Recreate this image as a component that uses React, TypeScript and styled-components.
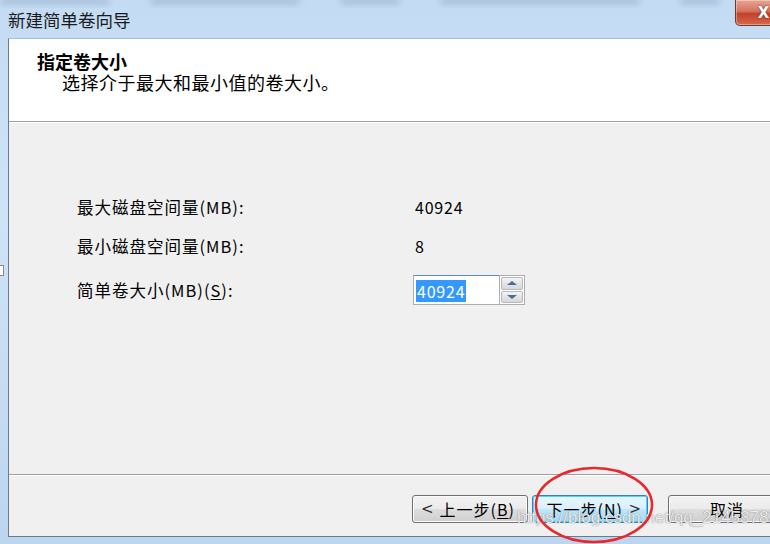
import React from 'react';
import styled, { createGlobalStyle, css } from 'styled-components';

const GlobalStyle = createGlobalStyle`
  html, body {
    margin: 0;
    padding: 0;
    width: 770px;
    height: 544px;
    overflow: hidden;
    background: #c9def3;
  }
  * {
    box-sizing: border-box;
  }
`;

const CJK = `"Noto Sans CJK SC", "Noto Sans", sans-serif`;

const Window = styled.div`
  position: relative;
  width: 803px;
  height: 544px;
  display: flex;
  flex-direction: column;
  background: linear-gradient(180deg, #c3dcf3 0%, #cfe3f7 40%, #bcd6f0 100%);
  font-family: ${CJK};
  color: #000;
`;

const TitleBar = styled.div`
  height: 38px;
  display: flex;
  flex-direction: column;
  position: relative;
`;

const GhostRow = styled.div`
  height: 8px;
  display: flex;
  gap: 40px;
  overflow: hidden;
`;

const Ghost = styled.div<{ $w: number }>`
  width: ${(p) => p.$w}px;
  height: 8px;
  margin-top: -3px;
  border-radius: 4px;
  background: rgba(80, 100, 130, 0.22);
  filter: blur(3px);
`;

const TitleRow = styled.div`
  flex: 1;
  display: flex;
  align-items: flex-start;
  padding-left: 8px;
`;

const TitleText = styled.div`
  font-size: 17.5px;
  line-height: 22px;
  margin-top: 1px;
  color: #1b1b1b;
`;

const CloseButton = styled.div`
  position: absolute;
  top: 0;
  left: 735px;
  width: 47px;
  height: 26px;
  border: 1px solid #6b3a34;
  border-top: none;
  border-radius: 0 0 5px 5px;
  background: linear-gradient(180deg, #e8a596 0%, #d4735d 45%, #c4402a 55%, #d46a4c 100%);
  box-shadow: inset 0 0 0 1px rgba(255, 255, 255, 0.35);
  color: #fff;
  font: bold 15px "DejaVu Sans", sans-serif;
  display: flex;
  align-items: center;
  justify-content: center;
  padding-left: 10px;
  text-shadow: 0 0 2px #5a1a10;
`;

const Frame = styled.div`
  flex: 1;
  margin: 0 8px 7px 8px;
  display: flex;
  flex-direction: column;
  border-left: 1px solid #6a7b8f;
  border-top: 1px solid #a9bfd6;
  border-bottom: 1px solid #6a7b8f;
  background: #f0f0f0;
`;

const Header = styled.div`
  height: 83px;
  background: #fff;
  padding: 12px 0 0 28px;
  border-bottom: 1px solid #a0a0a0;
  box-shadow: 0 1px 0 #fff;
`;

const HeaderTitle = styled.div`
  font-size: 18px;
  line-height: 21px;
  font-weight: bold;
`;

const HeaderSub = styled.div`
  font-size: 18px;
  line-height: 20px;
  padding-left: 25px;
  letter-spacing: 0.5px;
`;

const Body = styled.div`
  flex: 1;
  padding: 75px 0 0 68px;
  border-bottom: 1px solid #a0a0a0;
  box-shadow: 0 1px 0 #fff;
`;

const Form = styled.div`
  display: grid;
  grid-template-columns: 336px auto;
  row-gap: 19px;
  align-items: center;
`;

const Label = styled.div`
  font-size: 16.5px;
  line-height: 20px;
  letter-spacing: 1px;
`;

const Value = styled.div`
  font-size: 16px;
  line-height: 20px;
  letter-spacing: 0.8px;
  padding-left: 2px;
`;

const Spinner = styled.div`
  display: flex;
  height: 30px;
  width: 112px;
`;

const SpinInput = styled.div`
  width: 86px;
  height: 30px;
  border: 1px solid #abadb3;
  border-top-color: #5c8fc0;
  border-right: none;
  background: #fff;
  padding: 3px 0 0 2px;
`;

const Selected = styled.span`
  background: #3399ff;
  color: #fff;
  font-size: 16px;
  line-height: 22px;
  letter-spacing: 0.8px;
  padding: 0 1px;
  display: inline-block;
`;

const SpinButtons = styled.div`
  width: 26px;
  height: 30px;
  border: 1px solid #abadb3;
  background: #fff;
  padding: 1px;
  display: flex;
  flex-direction: column;
  gap: 1px;
`;

const SpinBtn = styled.div<{ $down?: boolean }>`
  flex: 1;
  border: 1px solid #b8b8b8;
  border-radius: 2px;
  background: linear-gradient(180deg, #f4f4f4 0%, #e4e4e4 50%, #d8d8d8 100%);
  display: flex;
  align-items: center;
  justify-content: center;
  &::after {
    content: '';
    width: 0;
    height: 0;
    border-left: 5px solid transparent;
    border-right: 5px solid transparent;
    ${(p) =>
      p.$down
        ? css`border-top: 4px solid #4a6aa0;`
        : css`border-bottom: 4px solid #4a6aa0;`}
  }
`;

const Footer = styled.div`
  height: 61px;
  display: flex;
  padding: 20px 0 0 403px;
  gap: 4px;
`;

const Button = styled.div<{ $focused?: boolean; $spaced?: boolean }>`
  flex: none;
  width: 116px;
  height: 28px;
  border: 1px solid #707070;
  border-radius: 3px;
  background: linear-gradient(180deg, #f2f2f2 0%, #ebebeb 48%, #dddddd 52%, #cfcfcf 100%);
  box-shadow: inset 0 0 0 1px #fcfcfc;
  font-size: 16px;
  line-height: 26px;
  white-space: nowrap;
  display: flex;
  align-items: center;
  padding: 0 6px 0 8px;
  margin-left: ${(p) => (p.$spaced ? '16px' : '0')};
  ${(p) =>
    p.$focused &&
    css`
      border-color: #3c7fb1;
      background: linear-gradient(180deg, #eaf6fd 0%, #d9f0fc 48%, #bee6fd 52%, #a7d9f5 100%);
      box-shadow: inset 0 0 0 1px #48d8fb;
    `}
`;

const CenteredText = styled.span`
  flex: 1;
  text-align: center;
  letter-spacing: 1px;
`;

const Key = styled.span`
  text-decoration: underline;
  text-underline-offset: 2px;
`;

const Chevron = styled.span`
  font-family: "DejaVu Sans", sans-serif;
  font-size: 15px;
  color: #333;
`;

const Watermark = styled.div`
  position: absolute;
  left: 517px;
  top: 508px;
  font: 17px "Liberation Sans", Arial, sans-serif;
  color: rgba(255, 255, 255, 0.85);
  text-shadow: 0 0 1px rgba(110, 110, 110, 0.8), 0 0 1px rgba(110, 110, 110, 0.5);
  pointer-events: none;
  white-space: nowrap;
`;

const Annotation = styled.svg`
  position: absolute;
  left: 530px;
  top: 462px;
  pointer-events: none;
`;

const EdgeMark = styled.div`
  position: absolute;
  left: -4px;
  top: 265px;
  width: 8px;
  height: 11px;
  border: 1px solid #888;
  background: #fff;
`;

export default function App() {
  return (
    <>
      <GlobalStyle />
      <Window>
        <TitleBar>
          <GhostRow>
            <Ghost $w={110} />
            <Ghost $w={150} />
            <Ghost $w={60} />
            <Ghost $w={200} />
            <Ghost $w={40} />
          </GhostRow>
          <TitleRow>
            <TitleText>新建简单卷向导</TitleText>
          </TitleRow>
          <CloseButton>X</CloseButton>
        </TitleBar>
        <Frame>
          <Header>
            <HeaderTitle>指定卷大小</HeaderTitle>
            <HeaderSub>选择介于最大和最小值的卷大小。</HeaderSub>
          </Header>
          <Body>
            <Form>
              <Label>最大磁盘空间量(MB):</Label>
              <Value>40924</Value>
              <Label>最小磁盘空间量(MB):</Label>
              <Value>8</Value>
              <Label>
                简单卷大小(MB)(<Key>S</Key>):
              </Label>
              <Spinner>
                <SpinInput>
                  <Selected>40924</Selected>
                </SpinInput>
                <SpinButtons>
                  <SpinBtn />
                  <SpinBtn $down />
                </SpinButtons>
              </Spinner>
            </Form>
          </Body>
          <Footer>
            <Button>
              <Chevron>&lt;</Chevron>
              <CenteredText>
                上一步(<Key>B</Key>)
              </CenteredText>
            </Button>
            <Button $focused>
              <CenteredText>
                下一步(<Key>N</Key>)
              </CenteredText>
              <Chevron>&gt;</Chevron>
            </Button>
            <Button $spaced>
              <CenteredText>取消</CenteredText>
            </Button>
          </Footer>
        </Frame>
        <EdgeMark />
        <Watermark>https://blog.csdn.net/qq_21453783</Watermark>
        <Annotation width="130" height="82" viewBox="0 0 130 82">
          <ellipse cx="64" cy="43" rx="58" ry="37" fill="none" stroke="#e8282c" strokeWidth="2.5" />
        </Annotation>
      </Window>
    </>
  );
}
